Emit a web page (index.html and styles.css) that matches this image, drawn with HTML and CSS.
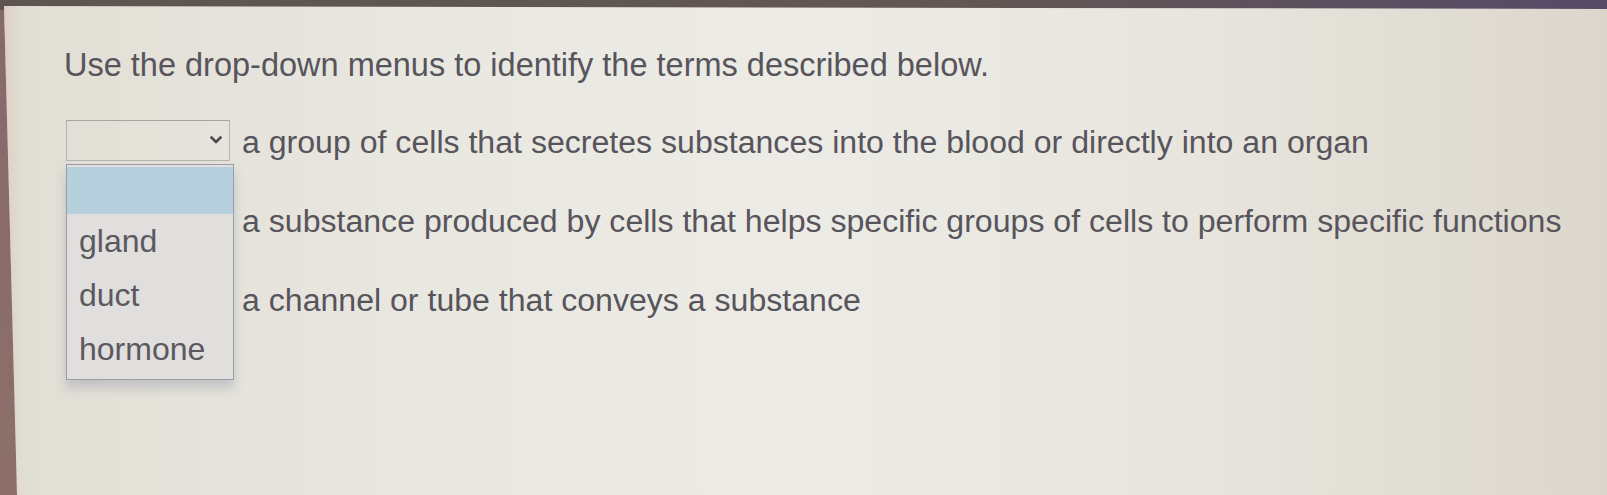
FILE: index.html
```html
<!DOCTYPE html>
<html lang="en">
<head>
    <meta charset="UTF-8">
    <meta name="viewport" content="width=device-width, initial-scale=1.0">
    <title>Identify the Terms</title>
    <link rel="stylesheet" href="styles.css">
</head>
<body>
    <div class="screen">
        <p class="prompt">Use the drop-down menus to identify the terms described below.</p>

        <div class="questions">
            <div class="question">
                <div class="picker">
                    <div class="select is-open">
                        <svg class="chevron" viewBox="0 0 12 8" width="12" height="8">
                            <path d="M1.5 1.5 L6 6 L10.5 1.5" fill="none" stroke="#4e4a52" stroke-width="2.6" stroke-linecap="round" stroke-linejoin="round"/>
                        </svg>
                    </div>
                    <ul class="options">
                        <li class="option is-active"></li>
                        <li class="option">gland</li>
                        <li class="option">duct</li>
                        <li class="option">hormone</li>
                    </ul>
                </div>
                <span class="desc">a group of cells that secretes substances into the blood or directly into an organ</span>
            </div>

            <div class="question">
                <div class="picker">
                    <div class="select"></div>
                </div>
                <span class="desc">a substance produced by cells that helps specific groups of cells to perform specific functions</span>
            </div>

            <div class="question">
                <div class="picker">
                    <div class="select"></div>
                </div>
                <span class="desc">a channel or tube that conveys a substance</span>
            </div>
        </div>
    </div>
</body>
</html>
```

FILE: styles.css
```css
html, body {
    margin: 0;
    padding: 0;
    height: 100%;
}
/* bezel: dark top bar over a warm brown side edge */
body {
    font-family: "Liberation Sans", Arial, sans-serif;
    background:
        linear-gradient(to right, #5e5550 0%, #625752 60%, #564a68 100%) top / 100% 10px no-repeat,
        linear-gradient(to bottom, #86696a 0%, #8d6f6a 100%);
    overflow: hidden;
}
/* left edge widens toward the bottom */
.screen {
    height: 100%;
    box-sizing: border-box;
    padding: 45px 0 0 64px;
    background: linear-gradient(to right, #e1ded4 0%, #e8e7e0 25%, #ecebe5 50%, #e7e5de 75%, #dcd7cc 100%);
    clip-path: polygon(4px 6px, 100% 9px, 100% 100%, 17px 100%);
    color: #57545c;
    position: relative;
}
.screen::before {
    content: "";
    position: absolute;
    left: 0;
    top: 0;
    bottom: 0;
    width: 24px;
    background: linear-gradient(to right, rgba(215, 180, 160, 0.4), rgba(215, 180, 160, 0));
    pointer-events: none;
}
.prompt {
    margin: 0;
    font-size: 32.5px;
    line-height: 40px;
}
.questions {
    margin-top: 18px;
    padding-left: 2px;
}
.question {
    display: flex;
    align-items: center;
    height: 79px;
    font-size: 32.1px;
}
.picker {
    position: relative;
    margin-right: 12px;
    margin-top: -5px;
}
.select {
    width: 164px;
    height: 41px;
    box-sizing: border-box;
    border: 1px solid #b6b3b0;
    border-top-color: #a7a4a4;
    display: flex;
    align-items: center;
    justify-content: flex-end;
    padding-right: 7px;
}
.chevron {
    display: block;
}
.options {
    position: absolute;
    top: 44px;
    left: 0;
    width: 168px;
    margin: 0;
    padding: 2px 0 3px;
    list-style: none;
    box-sizing: border-box;
    background-color: #e0dfdd;
    border: 1px solid #9d9ca6;
    box-shadow: 0 8px 10px rgba(110, 115, 150, 0.28);
    z-index: 2;
}
.option {
    height: 54px;
    line-height: 54px;
    padding-left: 12px;
    font-size: 32px;
    color: #5b5860;
}
.option.is-active {
    height: 47px;
    background-color: #b6d0de;
}
.desc {
    white-space: nowrap;
}
```
